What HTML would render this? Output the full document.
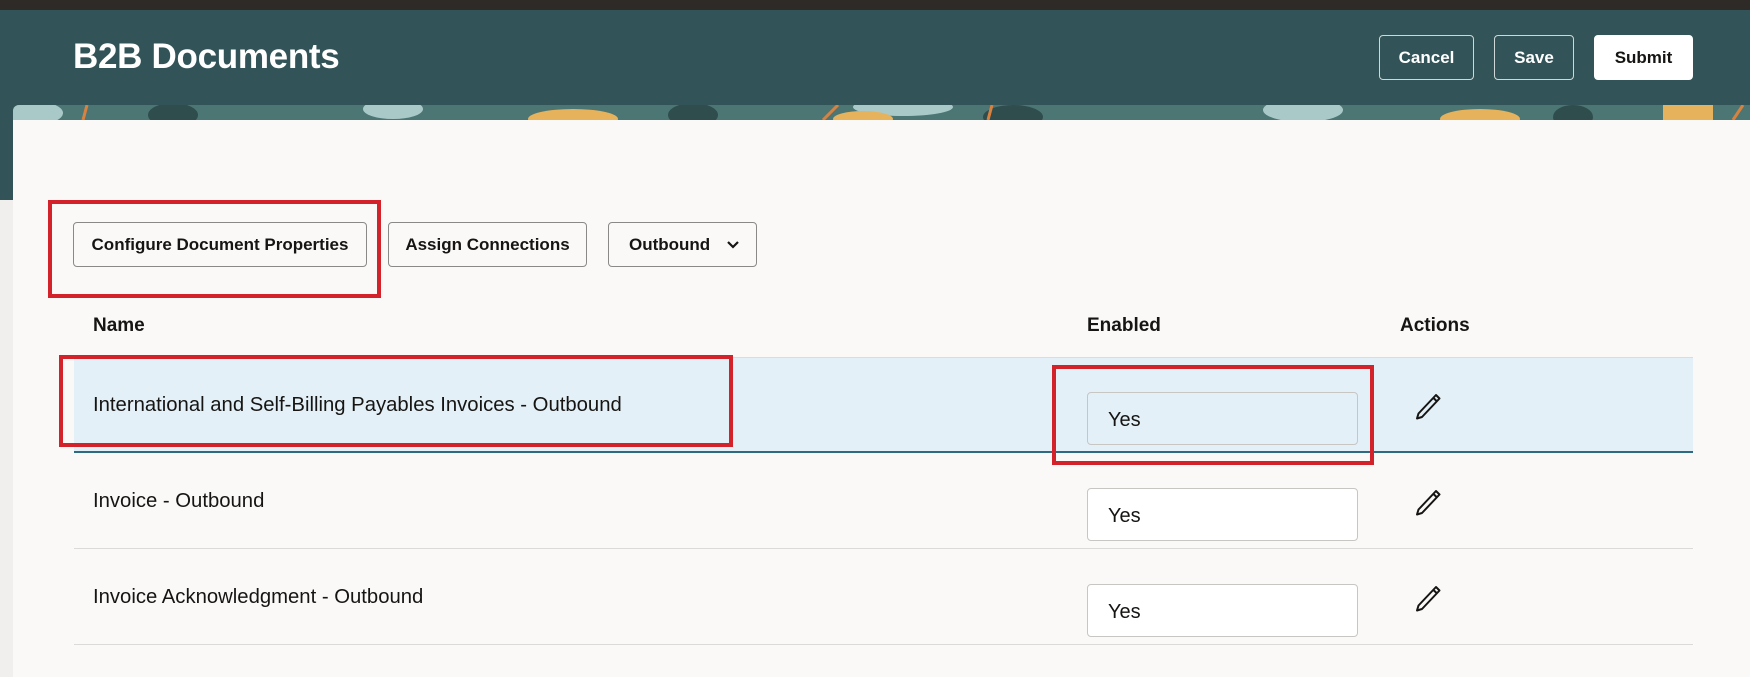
<!DOCTYPE html>
<html><head><style>
*{box-sizing:border-box;margin:0;padding:0}
body{width:1750px;height:677px;overflow:hidden;background:#f1efed;font-family:"Liberation Sans",sans-serif;position:relative;color:#161513}
.abs{position:absolute}
.topbar{left:0;top:0;width:1750px;height:10px;background:#2d2a27}
.header{left:0;top:10px;width:1750px;height:190px;background:#325458}
.title{left:73px;top:37px;font-size:35px;font-weight:bold;color:#fff;letter-spacing:-0.3px}
.hbtn{top:35px;height:45px;border:1px solid #cfd8d8;border-radius:4px;color:#fff;font-size:17px;font-weight:bold;display:flex;align-items:center;justify-content:center}
.card{left:13px;top:105px;width:1737px;height:572px;background:#fbf9f8;border-radius:6px 0 0 0;overflow:hidden}
.banner{left:0;top:0;width:1737px;height:15px;background:#4e7a78;overflow:hidden}
.btn{top:222px;height:45px;border:1px solid #8a8987;border-radius:4px;background:#fbf9f8;font-size:17px;font-weight:bold;display:flex;align-items:center;justify-content:center}
.red{border:4px solid #d3222a}
.th{top:315px;font-size:19px;font-weight:bold}
.row{left:74px;width:1619px}
.cell{font-size:20.3px}
.inp{left:1087px;width:271px;height:53px;border:1px solid #c8c6c3;border-radius:4px;background:#fff;font-size:20px;padding-left:20px;display:flex;align-items:center;padding-top:3px}
</style></head><body>
<div class="abs topbar"></div>
<div class="abs header"></div>
<div class="abs title">B2B Documents</div>
<div class="abs hbtn" style="left:1379px;width:95px">Cancel</div>
<div class="abs hbtn" style="left:1494px;width:80px">Save</div>
<div class="abs hbtn" style="left:1594px;width:99px;background:#fff;color:#161513;border-color:#fff">Submit</div>
<div class="abs card">
 <div class="abs banner">
  <svg width="1737" height="15" viewBox="0 0 1737 15">
   <rect width="1737" height="15" fill="#4b7674"/>
   <g fill="#a9c9c8"><ellipse cx="20" cy="8" rx="30" ry="12"/><ellipse cx="380" cy="4" rx="30" ry="10"/><ellipse cx="890" cy="2" rx="50" ry="9"/><ellipse cx="1290" cy="5" rx="40" ry="12"/></g>
   <g fill="#e6b25c"><ellipse cx="560" cy="14" rx="45" ry="10"/><ellipse cx="850" cy="14" rx="30" ry="8"/><ellipse cx="1467" cy="14" rx="40" ry="10"/><rect x="1650" y="0" width="50" height="15"/></g>
   <g fill="#2f4d4d"><ellipse cx="160" cy="10" rx="25" ry="12"/><ellipse cx="680" cy="10" rx="25" ry="12"/><ellipse cx="1000" cy="12" rx="30" ry="12"/><ellipse cx="1560" cy="12" rx="20" ry="12"/></g>
   <g stroke="#d9823f" stroke-width="3"><line x1="70" y1="15" x2="74" y2="0"/><line x1="975" y1="15" x2="979" y2="0"/><line x1="810" y1="15" x2="825" y2="0"/><line x1="1720" y1="15" x2="1730" y2="0"/></g>
  </svg>
 </div>
</div>
<div class="abs red" style="left:48px;top:200px;width:333px;height:98px"></div>
<div class="abs btn" style="left:73px;top:222px;width:294px">Configure Document Properties</div>
<div class="abs btn" style="left:388px;width:199px">Assign Connections</div>
<div class="abs btn" style="left:608px;width:149px;justify-content:flex-start;padding-left:20px">Outbound<svg style="margin-left:16px" width="14" height="10" viewBox="0 0 14 10"><path d="M2 2l5 5 5-5" stroke="#161513" stroke-width="2.2" fill="none"/></svg></div>
<div class="abs th" style="left:93px">Name</div>
<div class="abs th" style="left:1087px">Enabled</div>
<div class="abs th" style="left:1400px">Actions</div>
<div class="abs row" style="top:357px;height:96px;background:#e4f0f7;border-top:1px solid #dcdcdc;border-bottom:2px solid #2f6b80"></div>
<div class="abs row" style="top:548px;height:1px;background:#dcdad8"></div>
<div class="abs row" style="top:644px;height:1px;background:#dcdad8"></div>
<div class="abs cell" style="left:93px;top:394px">International and Self-Billing Payables Invoices - Outbound</div>
<div class="abs cell" style="left:93px;top:490px">Invoice - Outbound</div>
<div class="abs cell" style="left:93px;top:586px">Invoice Acknowledgment - Outbound</div>
<div class="abs inp" style="top:392px;background:#e4f0f7">Yes</div>
<div class="abs inp" style="top:488px">Yes</div>
<div class="abs inp" style="top:584px">Yes</div>
<div class="abs red" style="left:59px;top:355px;width:674px;height:92px"></div>
<div class="abs red" style="left:1052px;top:365px;width:322px;height:100px"></div>
<svg class="abs" style="left:1413px;top:392px" width="30" height="30" viewBox="0 0 30 30"><path d="M23 3l3.5 3.5L9 25l-5 1.5 1.5-5z M20.5 6l3.5 3.5" stroke="#161513" stroke-width="2" fill="none" stroke-linejoin="round"/></svg>
<svg class="abs" style="left:1413px;top:488px" width="30" height="30" viewBox="0 0 30 30"><path d="M23 3l3.5 3.5L9 25l-5 1.5 1.5-5z M20.5 6l3.5 3.5" stroke="#161513" stroke-width="2" fill="none" stroke-linejoin="round"/></svg>
<svg class="abs" style="left:1413px;top:584px" width="30" height="30" viewBox="0 0 30 30"><path d="M23 3l3.5 3.5L9 25l-5 1.5 1.5-5z M20.5 6l3.5 3.5" stroke="#161513" stroke-width="2" fill="none" stroke-linejoin="round"/></svg>
</body></html>
